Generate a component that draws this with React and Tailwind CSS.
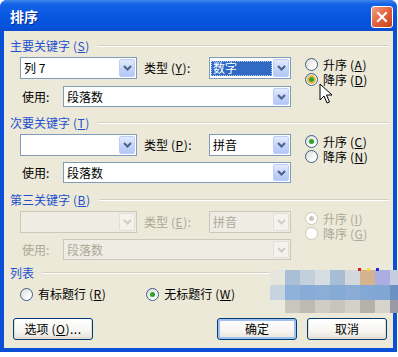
import React from "react";

function Chevron({ disabled }) {
  return (
    <svg width="9" height="6" viewBox="0 0 9 6">
      <path d="M1 1L4.5 4.5L8 1" fill="none" stroke={disabled ? "#cfcdc2" : "#4d6185"} strokeWidth="2" />
    </svg>
  );
}

function Combo({ className, text, disabled, selected }) {
  return (
    <div
      className={`${className} h-full flex border p-[1px] ${
        disabled ? "border-[#cbc8bb] bg-[#efede3]" : "border-[#7f9db9] bg-white"
      }`}
    >
      <div className="flex-1 min-w-0 flex items-center pr-[1px]">
        {selected ? (
          <span className="w-full h-[15px] flex items-center pl-[1px] bg-[#316ac5] text-white border border-dotted border-[#b8c8e8]">
            {text}
          </span>
        ) : (
          <span className={`pl-[2px] ${disabled ? "text-[#aca899]" : "text-black"}`}>{text}</span>
        )}
      </div>
      <div
        className={`w-[16px] shrink-0 flex items-center justify-center rounded-[2px] border ${
          disabled
            ? "bg-[#f3f2ec] border-[#e2e0d6]"
            : "bg-[linear-gradient(180deg,#e3ebfe,#c1d3fb_60%,#b2c7f5)] border-[#bccdf8]"
        }`}
      >
        <Chevron disabled={disabled} />
      </div>
    </div>
  );
}

function Radio({ checked, hover, disabled }) {
  return (
    <span
      className={`relative w-[13px] h-[13px] shrink-0 rounded-full border flex items-center justify-center ${
        disabled
          ? "border-[#cac8bb] bg-white"
          : "border-[#3c5f86] bg-[linear-gradient(135deg,#dcdad2,#ffffff_75%)]"
      }`}
    >
      {hover && <span className="absolute inset-[1px] rounded-full border-2 border-[#f6b543]" />}
      {checked && (
        <span className={`relative w-[5px] h-[5px] rounded-full ${disabled ? "bg-[#cac8bb]" : "bg-[#2ba42b]"}`} />
      )}
    </span>
  );
}

function Key({ k, tail = "" }) {
  return (
    <span className="ml-[3px] tracking-[0.5px] whitespace-nowrap">
      (<u>{k}</u>){tail}
    </span>
  );
}

function RadioLine({ label, k, checked, hover, disabled }) {
  return (
    <div className={`h-[15px] flex items-center ${disabled ? "text-[#aca899]" : "text-black"}`}>
      <Radio checked={checked} hover={hover} disabled={disabled} />
      <span className="ml-[5px]">{label}</span>
      <Key k={k} />
    </div>
  );
}

function Header({ label, k, className }) {
  return (
    <div className={`${className} h-[14px] flex items-center pl-[6px] pr-[4px] text-[#1d50cf]`}>
      <span className="whitespace-nowrap">{label}</span>
      {k && <Key k={k} />}
      <div className="flex-1 ml-[8px] h-[2px] border-t border-[#d4d1c3] border-b border-b-white" />
    </div>
  );
}

function Section({ className, first, typeKey, typeText, selected, disabled, radios, usageGap }) {
  const grey = disabled ? "text-[#aca899]" : "text-black";
  return (
    <div className={`${className} flex pl-[16px]`}>
      <div className="w-[271px] flex flex-col">
        <div className="h-[22px] flex items-center">
          <Combo className="w-[117px]" text={first} disabled={disabled} />
          <div className={`ml-[7px] w-[65px] flex items-center ${grey}`}>
            <span>类型</span>
            <Key k={typeKey} tail=":" />
          </div>
          <Combo className="w-[82px]" text={typeText} disabled={disabled} selected={selected} />
        </div>
        <div className={`${usageGap} h-[21px] flex items-center`}>
          <span className={`ml-[2px] w-[41px] ${grey}`}>使用:</span>
          <Combo className="w-[228px]" text="段落数" disabled={disabled} />
        </div>
      </div>
      <div className="ml-[14px] flex flex-col">
        {radios.map((r) => (
          <RadioLine key={r.k} {...r} disabled={disabled} />
        ))}
      </div>
    </div>
  );
}

function XpButton({ children, isDefault, className }) {
  return (
    <button
      type="button"
      className={`${className} w-[80px] h-[22px] rounded-[3px] border border-[#003c74] bg-[linear-gradient(180deg,#ffffff,#f6f5f0_60%,#e4e1d6)] text-black flex items-center justify-center ${
        isDefault ? "shadow-[inset_0_0_0_2px_#a1bff0]" : "shadow-[inset_0_-1px_0_1px_#e3ded2]"
      }`}
    >
      {children}
    </button>
  );
}

const mosaic = [
  ["bg-[#e6e5de]", "bg-[#a9bfd6]", "bg-[#c3d0dc]", "bg-[#d6dde2]", "bg-[#a7bdd4]", "bg-[#d3d8dc]", "bg-[#d5b38e]", "bg-[#aaaee0]", "bg-[#c8cce0]"],
  ["bg-[#c6d4e0]", "bg-[#8fb2da]", "bg-[#87acd8]", "bg-[#8badd6]", "bg-[#86aad6]", "bg-[#8aacd6]", "bg-[#84a8d6]", "bg-[#82a6d4]", "bg-[#6c90c4]"],
  ["bg-[#ebe8dc]", "bg-[#c8c6be]", "bg-[#bdbab2]", "bg-[#cfcdc5]", "bg-[#c8c5bc]", "bg-[#d3d1c9]", "bg-[#b4b1a8]", "bg-[#d6d4cc]", "bg-[#9a9aa6]"],
];

export default function App() {
  return (
    <div className="relative w-[398px] h-[357px] bg-white overflow-hidden font-['Noto_Sans_CJK_SC','Noto_Sans',sans-serif] text-[12px] leading-[14px]">
      <div className="w-[397px] h-[352px] rounded-t-[7px] bg-[#0b4fd6] flex flex-col overflow-hidden">
        {/* title bar */}
        <div className="h-[31px] shrink-0 flex items-center pl-[10px] pr-[4px] bg-[linear-gradient(180deg,#3f86ef_0%,#1462e6_14%,#0757e0_50%,#0553dc_85%,#0b4ccc_100%)]">
          <span className="text-white font-bold text-[14px] [text-shadow:1px_1px_0_#0a2f96]">排序</span>
          <div className="ml-auto mt-[2px] w-[22px] h-[22px] rounded-[3px] border border-white bg-[linear-gradient(135deg,#f4a07f,#e2623d_50%,#c73f1a)] flex items-center justify-center">
            <svg width="12" height="12" viewBox="0 0 12 12">
              <path d="M2 2L10 10M10 2L2 10" stroke="#fff" strokeWidth="2.2" strokeLinecap="square" />
            </svg>
          </div>
        </div>

        {/* client area */}
        <div className="mx-[4px] mb-[4px] flex-1 bg-[#ece9d8] flex flex-col">
          <Header className="mt-[8px]" label="主要关键字" k="S" />
          <Section
            className="mt-[4px]"
            first="列 7"
            typeKey="Y"
            typeText="数字"
            selected
            usageGap="mt-[7px]"
            radios={[
              { label: "升序", k: "A" },
              { label: "降序", k: "D", checked: true, hover: true },
            ]}
          />

          <Header className="mt-[9px]" label="次要关键字" k="T" />
          <Section
            className="mt-[4px]"
            first=""
            typeKey="P"
            typeText="拼音"
            usageGap="mt-[6px]"
            radios={[
              { label: "升序", k: "C", checked: true },
              { label: "降序", k: "N" },
            ]}
          />

          <Header className="mt-[10px]" label="第三关键字" k="B" />
          <Section
            className="mt-[4px]"
            first=""
            typeKey="E"
            typeText="拼音"
            disabled
            usageGap="mt-[6px]"
            radios={[
              { label: "升序", k: "I", checked: true },
              { label: "降序", k: "G" },
            ]}
          />

          <Header className="mt-[6px]" label="列表" />
          <div className="mt-[6px] h-[16px] flex items-center pl-[16px]">
            <RadioLine label="有标题行" k="R" />
            <div className="ml-[40px]">
              <RadioLine label="无标题行" k="W" checked />
            </div>
          </div>

          <div className="mt-[16px] flex items-center pl-[9px]">
            <XpButton>
              <span>选项</span>
              <Key k="O" tail="..." />
            </XpButton>
            <XpButton className="ml-[124px]" isDefault>
              确定
            </XpButton>
            <XpButton className="ml-[10px]">取消</XpButton>
          </div>
        </div>
      </div>

      {/* mouse cursor */}
      <svg className="absolute left-[319px] top-[83px]" width="14" height="22" viewBox="0 0 14 22">
        <path d="M1 1L1 17L5 13L8 20L10.5 19L7.5 12L13 12Z" fill="#fff" stroke="#000" strokeWidth="1" strokeLinejoin="round" />
      </svg>

      {/* pixelated blur patch */}
      <div className="absolute left-[270px] top-[270px] w-[128px] flex flex-col">
        {mosaic.map((row, i) => (
          <div key={i} className={`flex ${i === 2 ? "h-[13px]" : "h-[15px]"}`}>
            {row.map((c, j) => (
              <div key={j} className={`${c} w-[15px] shrink-0`} />
            ))}
          </div>
        ))}
      </div>
      <div className="absolute left-[358px] top-[268px] w-[3px] h-[3px] bg-[#d02020]" />
      <div className="absolute left-[367px] top-[268px] w-[3px] h-[3px] bg-[#f0e030]" />
      <div className="absolute left-[376px] top-[268px] w-[3px] h-[3px] bg-[#1830d0]" />
    </div>
  );
}
